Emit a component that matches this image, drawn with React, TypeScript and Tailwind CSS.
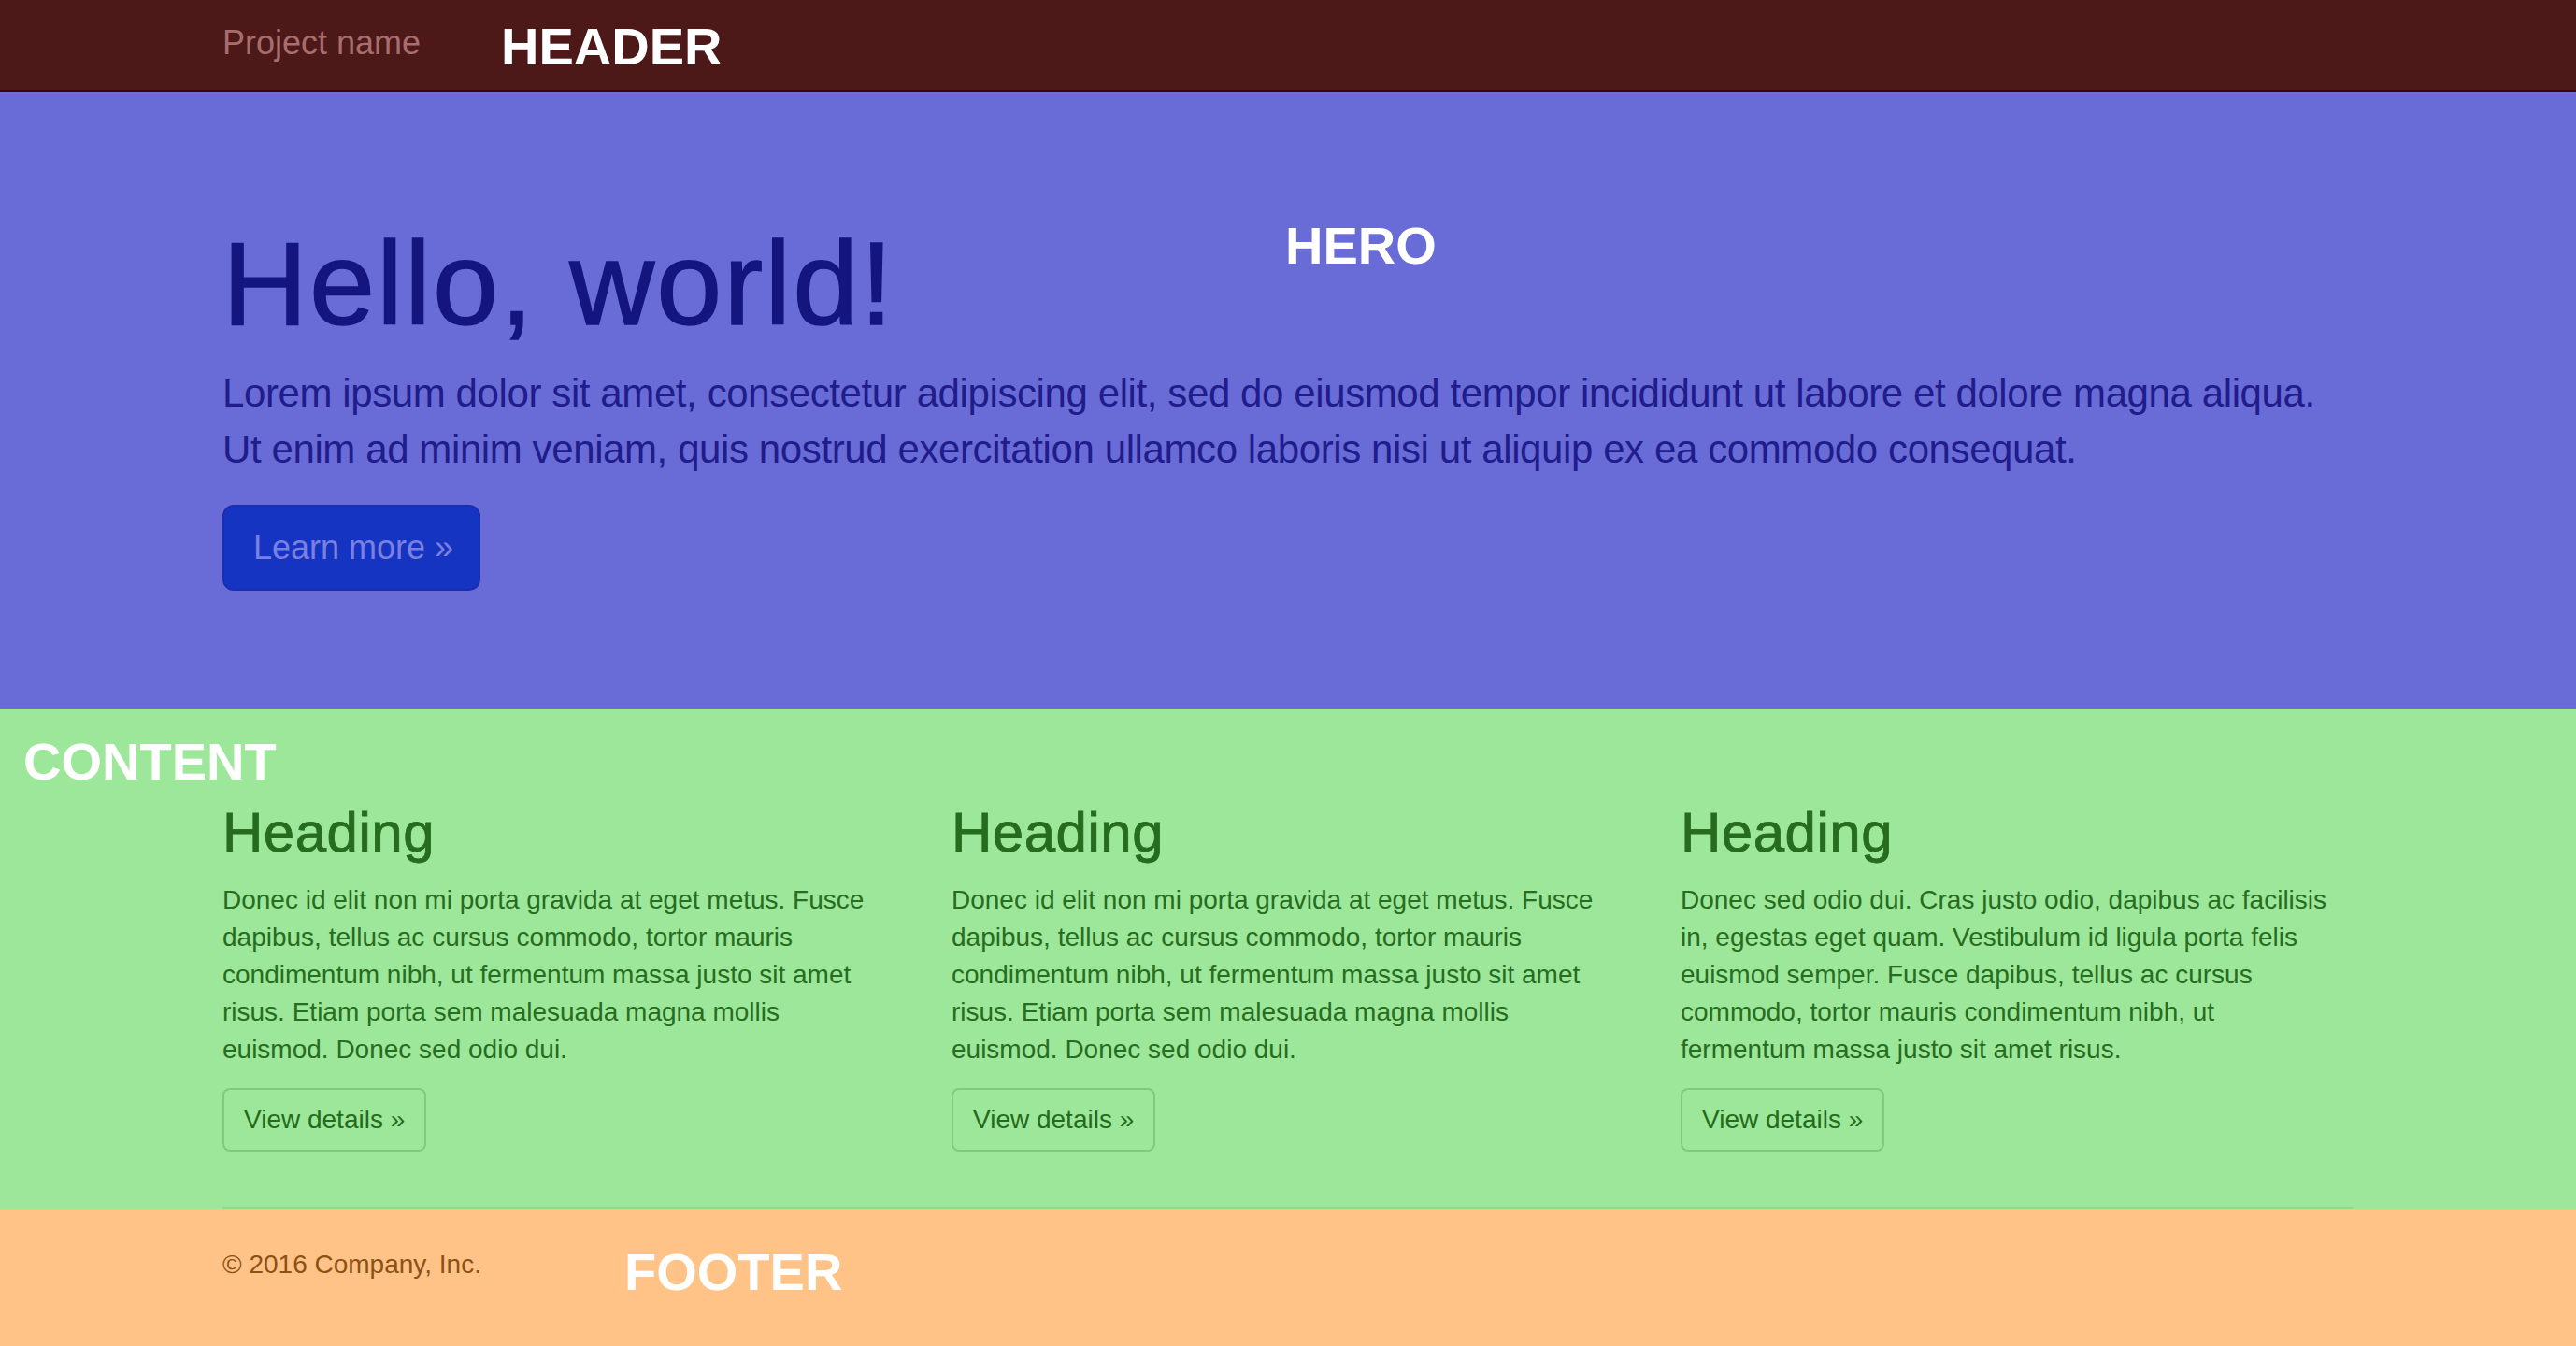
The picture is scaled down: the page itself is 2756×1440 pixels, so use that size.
import React from "react";

const font = { fontFamily: '"Liberation Sans", Arial, Helvetica, sans-serif' };

function Label({ children, className }: { children: React.ReactNode; className: string }) {
  return (
    <div className={`absolute text-[56px] leading-[56px] font-bold text-white ${className}`}>{children}</div>
  );
}

const cols = [
  [
    "Donec id elit non mi porta gravida at eget metus. Fusce",
    "dapibus, tellus ac cursus commodo, tortor mauris",
    "condimentum nibh, ut fermentum massa justo sit amet",
    "risus. Etiam porta sem malesuada magna mollis",
    "euismod. Donec sed odio dui.",
  ],
  [
    "Donec id elit non mi porta gravida at eget metus. Fusce",
    "dapibus, tellus ac cursus commodo, tortor mauris",
    "condimentum nibh, ut fermentum massa justo sit amet",
    "risus. Etiam porta sem malesuada magna mollis",
    "euismod. Donec sed odio dui.",
  ],
  [
    "Donec sed odio dui. Cras justo odio, dapibus ac facilisis",
    "in, egestas eget quam. Vestibulum id ligula porta felis",
    "euismod semper. Fusce dapibus, tellus ac cursus",
    "commodo, tortor mauris condimentum nibh, ut",
    "fermentum massa justo sit amet risus.",
  ],
];

export default function App() {
  return (
    <div className="min-h-screen flex flex-col" style={font}>
      {/* HEADER */}
      <header className="relative h-[98px] bg-[#4c1818] border-b-2 border-[#380808]">
        <div className="mx-auto w-[2340px] px-[30px] pt-[26px]">
          <span className="text-[36px] leading-[40px] text-[#a86e6e]">Project name</span>
        </div>
        <Label className="left-[536px] top-[22px]">HEADER</Label>
      </header>

      {/* HERO */}
      <section className="relative bg-[#696bd6] pt-[137px] pb-[126px]">
        <Label className="left-[1375px] top-[137px]">HERO</Label>
        <div className="mx-auto w-[2340px] px-[30px]">
          <h1 className="text-[126px] leading-[138px] tracking-[2px] [-webkit-text-stroke:1.5px_#14157f] text-[#14157f]">
            Hello, world!
          </h1>
          <p className="mt-[18px] text-[42px] leading-[60px] tracking-[-0.4px] whitespace-nowrap text-[#1f1c8c]">
            Lorem ipsum dolor sit amet, consectetur adipiscing elit, sed do eiusmod tempor incididunt ut labore et dolore magna aliqua.
            <br />
            Ut enim ad minim veniam, quis nostrud exercitation ullamco laboris nisi ut aliquip ex ea commodo consequat.
          </p>
          <button className="mt-[29px] h-[92px] pl-[31px] pr-[27px] rounded-[12px] bg-[#1634c2] border-2 border-[#1a2eb2] text-[36px] leading-[40px] text-[#7b80e0]">
            Learn more »
          </button>
        </div>
      </section>

      {/* CONTENT */}
      <section className="relative bg-[#9ce799] pt-[100px]">
        <Label className="left-[25px] top-[29px]">CONTENT</Label>
        <div className="mx-auto w-[2340px] px-[30px]">
          <div className="grid grid-cols-3 gap-[60px]">
            {cols.map((lines, i) => (
              <div key={i}>
                <h2 className="text-[60px] leading-[66px] tracking-[0.5px] [-webkit-text-stroke:0.8px_#266b1e] text-[#266b1e]">
                  Heading
                </h2>
                <p className="mt-[19px] text-[28px] leading-[40px] whitespace-nowrap text-[#276c1f]">
                  {lines.map((l, j) => (
                    <React.Fragment key={j}>
                      {l}
                      {j < lines.length - 1 && <br />}
                    </React.Fragment>
                  ))}
                </p>
                <button className="mt-[21px] h-[68px] px-[21px] rounded-[8px] border-2 border-[#80ca7d] text-[28px] leading-[40px] text-[#246b1c]">
                  View details »
                </button>
              </div>
            ))}
          </div>
          <div className="mt-[59px] h-[2px] bg-[#8fdb8c]" />
        </div>
      </section>

      {/* FOOTER */}
      <footer className="relative flex-1 bg-[#ffc287] pt-[40px] pb-[60px]">
        <Label className="left-[668px] top-[40px]">FOOTER</Label>
        <div className="mx-auto w-[2340px] px-[30px]">
          <p className="text-[28px] leading-[40px] text-[#8c5215]">© 2016 Company, Inc.</p>
        </div>
      </footer>
    </div>
  );
}
